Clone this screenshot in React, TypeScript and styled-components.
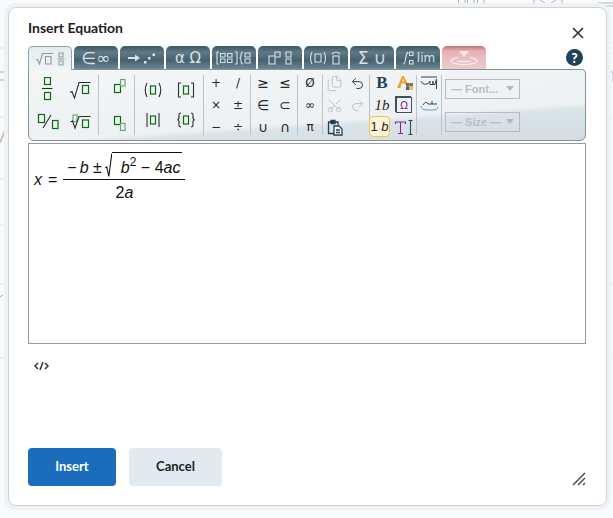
import React from 'react';
import styled, { createGlobalStyle } from 'styled-components';
import { Files, Undo2, Redo2, Scissors } from 'lucide-react';

const GREEN = '#0b6a12';
const LIGHT = '#62ad6a';
const INK = '#2b2f33';

const GlobalStyle = createGlobalStyle`
  html, body { margin: 0; padding: 0; background: #f9fafc; }
  body { font-family: Lato, "Noto Sans", sans-serif; color: #202122; }
`;

const Page = styled.div`
  position: relative;
  width: 613px;
  height: 518px;
  padding: 7px 6px 0 8px;
  box-sizing: border-box;
  overflow: hidden;
`;

const Backdrop = styled.svg`
  position: absolute;
  inset: 0;
`;

const Dialog = styled.div`
  position: relative;
  height: 499px;
  box-sizing: border-box;
  padding: 0 20px 19px 19px;
  display: flex;
  flex-direction: column;
  background: #fff;
  border: 1px solid #cdd3d9;
  border-radius: 8px;
  box-shadow: 0 0 0 4px #eff2f5;
`;

const Header = styled.div`
  height: 38px;
  padding-top: 1px;
  box-sizing: border-box;
  display: flex;
  align-items: center;
  justify-content: space-between;
`;

const Title = styled.h2`
  margin: 0;
  font-size: 14px;
  font-weight: 700;
  color: #202122;
`;

const CloseButton = styled.button`
  display: flex;
  border: 0;
  padding: 0;
  margin: 10px 2px 0 0;
  background: none;
`;

const TabRow = styled.div`
  height: 23px;
  display: flex;
  gap: 2px;
  align-items: flex-end;
`;

const Tab = styled.div<{ $kind?: 'active' | 'alert'; $size?: number }>`
  width: 44px;
  height: ${p => (p.$kind === 'active' ? '24px' : '23px')};
  margin-bottom: ${p => (p.$kind === 'active' ? '-1px' : '0')};
  position: relative;
  z-index: ${p => (p.$kind === 'active' ? 2 : 0)};
  box-sizing: border-box;
  border-radius: 5px 5px 0 0;
  display: flex;
  align-items: center;
  justify-content: center;
  gap: 2px;
  font-family: "DejaVu Sans", sans-serif;
  font-size: ${p => p.$size ?? 13}px;
  white-space: nowrap;
  color: ${p => (p.$kind === 'active' ? '#8d9ca4' : p.$kind === 'alert' ? '#fbeeee' : '#d8e1e5')};
  background: ${p =>
    p.$kind === 'active'
      ? 'linear-gradient(#e6ebee, #f1f4f5)'
      : p.$kind === 'alert'
        ? 'linear-gradient(#c96f72 0, #e6b1b2 22%, #e9bfc0 55%, #efcaca 100%)'
        : 'linear-gradient(#3c5866 0, #5f7985 28%, #47626f 62%, #6c8792 100%)'};
  border: ${p => (p.$kind === 'active' ? '1px solid #8fa3ac' : '0')};
  border-bottom: 0;
`;

const HelpDot = styled.div`
  margin: 0 3px 3px auto;
  width: 17px;
  height: 17px;
  border-radius: 50%;
  background: #1f4257;
  color: #fff;
  font-size: 14px;
  font-weight: 900;
  line-height: 17px;
  text-align: center;
`;

const Toolbar = styled.div`
  height: 72px;
  box-sizing: border-box;
  display: flex;
  align-items: center;
  border: 1px solid #7f959f;
  border-radius: 0 4px 6px 6px;
  background: linear-gradient(176deg, #f4f6f7 0%, #edf1f3 66%, #dae3e7 71%, #d2dce1 100%);
`;

const Group = styled.div<{ $cols: number; $rows: number; $cell: number; $width: number }>`
  width: ${p => p.$width}px;
  height: 60px;
  flex: none;
  display: grid;
  grid-template-columns: repeat(${p => p.$cols}, ${p => p.$cell}px);
  grid-template-rows: repeat(${p => p.$rows}, ${p => (p.$rows === 3 ? 22 : 30)}px);
  justify-content: center;
  align-content: center;
  box-sizing: border-box;
  border-right: 1px solid #bcc4c8;
`;

const Cell = styled.div`
  display: flex;
  align-items: center;
  justify-content: center;
`;

const Sym = styled(Cell)<{ $size?: number }>`
  font-family: "DejaVu Sans", sans-serif;
  font-size: ${p => p.$size ?? 12}px;
  color: #26292b;
`;

const ToolText = styled(Cell)`
  height: 22px;
  font-family: "Liberation Serif", serif;
  font-size: 15px;
  font-style: italic;
  color: #1f2326;
`;

const SelectedTool = styled(Cell)`
  height: 21px;
  margin-left: -2px;
  width: 21px;
  box-sizing: border-box;
  border-radius: 4px;
  border: 1px solid #f4c24d;
  background: #fcf3d9;
  font-family: "Liberation Sans", sans-serif;
  font-size: 13px;
  color: #1f2326;
  white-space: pre;
`;

const BoldB = styled(Cell)`
  font-family: "Liberation Serif", serif;
  font-size: 17px;
  font-weight: 700;
  color: #1e4257;
`;

const BoxedOmega = styled.span`
  width: 14px;
  height: 14px;
  display: flex;
  align-items: center;
  justify-content: center;
  font-family: "DejaVu Sans", sans-serif;
  font-size: 10px;
  color: #7b2b90;
  border: 1px solid #3b5260;
  box-shadow: -1px -1px 0 #3b5260;
`;

const CutIcon = styled(Scissors)`
  transform: rotate(-90deg);
`;

const Selects = styled.div`
  flex: none;
  margin-left: 3px;
  height: 53px;
  display: flex;
  flex-direction: column;
  justify-content: space-between;
`;

const FakeSelect = styled.div`
  width: 75px;
  height: 20px;
  box-sizing: border-box;
  padding: 0 5px;
  display: flex;
  align-items: center;
  justify-content: space-between;
  border: 1px solid #b6bcc0;
  font-family: "Liberation Sans", sans-serif;
  font-size: 11px;
  font-weight: 700;
  color: #b9bfc3;
`;

const Caret = styled.span`
  border-left: 4px solid transparent;
  border-right: 4px solid transparent;
  border-top: 5px solid #b3b9bd;
`;

const Editor = styled.div`
  margin-top: 2px;
  height: 201px;
  box-sizing: border-box;
  border: 1px solid #999;
  padding: 9px 0 0 5px;
`;

const Equation = styled.div`
  display: flex;
  align-items: center;
  gap: 6px;
  font-family: "Liberation Sans", sans-serif;
  font-size: 16px;
  color: #111;
  i { font-style: italic; }
`;

const Fraction = styled.div`
  display: inline-flex;
  flex-direction: column;
  align-items: center;
`;

const Numerator = styled.div`
  display: flex;
  align-items: flex-end;
  box-sizing: border-box;
  height: 27px;
  padding: 0 3px 2px 4px;
  border-bottom: 1px solid #111;
  line-height: 18px;
  white-space: pre;
  sup { font-size: 12px; line-height: 0; position: relative; top: -7px; vertical-align: baseline; }
`;

const Op = styled.span`
  margin: 0 3px 0 0;
`;

const Denominator = styled.div`
  box-sizing: border-box;
  height: 26px;
  padding-top: 3px;
  line-height: 19px;
`;

const Radicand = styled.span`
  border-top: 1px solid #111;
  padding: 6px 2px 0 9px;
  line-height: 18px;
`;

const SourceRow = styled.div`
  margin: 14px 0 0 6px;
  height: 16px;
  display: flex;
  align-items: center;
`;

const Footer = styled.div`
  margin-top: auto;
  display: flex;
  align-items: flex-end;
  gap: 13px;
`;

const ActionButton = styled.button<{ $primary?: boolean }>`
  width: ${p => (p.$primary ? 88 : 93)}px;
  height: 38px;
  padding: 0 0 2px;
  border: 0;
  border-radius: 4px;
  font-family: Lato, sans-serif;
  font-size: 13px;
  font-weight: 700;
  background: ${p => (p.$primary ? '#1a6dbc' : '#e3e9f1')};
  color: ${p => (p.$primary ? '#fff' : '#202122')};
`;

const ResizeGrip = styled.svg`
  margin-left: auto;
`;

// drawn math templates, all on a 26x26 grid
const Box = ({ x, y, w = 6, h = 8, light }: { x: number; y: number; w?: number; h?: number; light?: boolean }) => (
  <rect x={x} y={y} width={w} height={h} fill="none" stroke={light ? LIGHT : GREEN} strokeWidth="1.2" />
);

const Tpl = ({ children }: { children: React.ReactNode }) => (
  <svg width="26" height="26" viewBox="0 0 26 26" fill="none" stroke={INK} strokeWidth="1.1">
    {children}
  </svg>
);

const templates: Record<string, React.ReactNode> = {
  frac: <><Box x={10.5} y={0.5} h={7} /><path d="M8 11.5H18.5" /><Box x={10.5} y={15.5} h={7} /></>,
  sqrt: <><path d="M3 15.5L5 14.5L7.5 21L12 5.5H23.5" /><Box x={15.5} y={8.5} h={8} /></>,
  slash: <><Box x={4.5} y={7.5} /><path d="M9 21L17 8" /><Box x={18.5} y={13.5} w={5.5} /></>,
  root: <><Box x={6} y={8} w={4} h={6.5} light /><path d="M3.5 15L5.5 14L8 21L12 9.5H23.5" /><Box x={15.5} y={13} h={7.5} /></>,
  sup: <><Box x={10.5} y={7.5} /><Box x={16.5} y={2.5} w={4.5} h={6.5} light /></>,
  sub: <><Box x={10.5} y={9.5} /><Box x={16.5} y={16.5} w={4.5} h={7} light /></>,
  paren: <><path d="M7 6Q3.5 13 7 20M19 6Q22.5 13 19 20" /><Box x={10.5} y={9} w={5} /></>,
  bracket: <><path d="M8 6H5.5V20H8M18 6H20.5V20H18" /><Box x={10.5} y={9} w={5} /></>,
  abs: <><path d="M7 6V20M19 6V20" /><Box x={10.5} y={9} w={5} /></>,
  brace: <><path d="M8 6Q5.5 6 6 9T4.5 13Q6.5 13 6 16.5T8 20M18 6Q20.5 6 20 9T21.5 13Q19.5 13 20 16.5T18 20" /><Box x={10.5} y={9} w={5} /></>,
};

const TabIcon = ({ d, w = 30 }: { d: string; w?: number }) => (
  <svg width={w} height="16" viewBox={`0 0 ${w} 14`} fill="none" stroke="currentColor" strokeWidth="1.1">
    <path d={d} />
  </svg>
);

const Radical = () => (
  <svg width="7" height="24" viewBox="0 0 7 24" fill="none" stroke="#111" strokeWidth="1.1">
    <path d="M0.3 15L1.800 14L3.800 23.500L6.800 0.500" />
  </svg>
);

const symbols = [
  { size: 12, items: ['+', '/', '×', '±', '−', '÷'] },
  { size: 14, items: ['≥', '≤', '∈', '⊂', '∪', '∩'] },
];

export default function App() {
  return (
    <Page>
      <GlobalStyle />
      <Backdrop width="613" height="518" fill="none" stroke="#dfe3e8">
        <path d="M0 48H8M0 117H8M0 179H8M0 225H8M0 284H8M0 358H8M607 48H613M607 117H613M607 284H613M607 358H613" />
        <path d="M458.500 0V5.500H465V0M467.500 0V5.500H474V0M477.500 0V5.500H484V0M534 0V6M562 0V6M540 0L548 5L556 0M598 3H613M600 6H613" stroke="#aab2ba" />
        <path d="M0 143L7 125" stroke="#c9c3b4" strokeWidth="2" />
        <path d="M0 297L3 295" stroke="#aab1b8" />
        <path d="M0 72H5M0 80H5M609 72H613V82" stroke="#c4ccd4" strokeWidth="1.5" />
      </Backdrop>
      <Dialog>
        <Header>
          <Title>Insert Equation</Title>
          <CloseButton aria-label="Close">
            <svg width="12" height="12" viewBox="0 0 12 12" stroke="#333" strokeWidth="1.7">
              <path d="M1 1L11 11M11 1L1 11" />
            </svg>
          </CloseButton>
        </Header>
        <TabRow>
          <Tab $kind="active">
            <TabIcon d="M1 8L2.500 7.500L4.500 12L7.500 1.500H18M10.500 4.500H16V12H10.500ZM24 1H28V5H24ZM22.500 7H29.500M24 9H28V13H24Z" />
          </Tab>
          <Tab $size={17}>∈∞</Tab>
          <Tab>
            <svg width="30" height="14" viewBox="0 0 30 14" fill="currentColor">
              <path d="M1 6H8V3.500L13 7L8 10.500V8H1Z" />
              <path d="M17 10h2.500v2.500H17ZM21 6h2.500v2.500H21ZM25.500 2.500H28V5H25.500Z" />
            </svg>
          </Tab>
          <Tab $size={15}>α Ω</Tab>
          <Tab>
            <TabIcon w={36} d="M3 1H1V13H3M19 1H21V13H19M4.500 2.500H9V6H4.500ZM11.500 2.500H16V6H11.500ZM4.500 8H9V11.500H4.500ZM11.500 8H16V11.500H11.500ZM27 1Q25 1 25 4T23.500 7Q25 7 25 10T27 13M29 2H34V6H29ZM29 8H34V12H29Z" />
          </Tab>
          <Tab>
            <TabIcon d="M4 5H10V13H4ZM10 1H15V6H10ZM21 1H26V6H21ZM21 8H26V13H21Z" />
          </Tab>
          <Tab>
            <TabIcon w={36} d="M4 1Q1 7 4 13M16 1Q19 7 16 13M7 3H13V11H7ZM25 5H31V13H25ZM24 3Q28 -1 32 3" />
          </Tab>
          <Tab $size={17}>Σ ∪</Tab>
          <Tab $size={12}>
            <TabIcon w={14} d="M2 13Q4 13 4.500 8T7 1M8.500 1H12V4.500H8.500ZM8.500 9.500H12V13H8.500Z" />
            lim
          </Tab>
          <Tab $kind="alert">
            <svg width="30" height="16" viewBox="0 0 30 16" fill="none" stroke="currentColor" strokeWidth="1.1">
              <path d="M10 1H20L15 7Z" fill="currentColor" stroke="none" />
              <path d="M9 7.500C4 8.500 2 10 2 11C2 13 8 14.500 15 14.500S28 13 28 11C28 10 26 8.500 21 7.500M8 10.500C8 12 22 12 22 10.500" />
            </svg>
          </Tab>
          <HelpDot>?</HelpDot>
        </TabRow>
        <Toolbar>
          <Group $cols={2} $rows={2} $cell={33} $width={70}>
            {['frac', 'sqrt', 'slash', 'root'].map(t => (
              <Cell key={t}><Tpl>{templates[t]}</Tpl></Cell>
            ))}
          </Group>
          <Group $cols={1} $rows={2} $cell={33} $width={36}>
            {['sup', 'sub'].map(t => (
              <Cell key={t}><Tpl>{templates[t]}</Tpl></Cell>
            ))}
          </Group>
          <Group $cols={2} $rows={2} $cell={33} $width={69}>
            {['paren', 'bracket', 'abs', 'brace'].map(t => (
              <Cell key={t}><Tpl>{templates[t]}</Tpl></Cell>
            ))}
          </Group>
          {symbols.map((set, i) => (
            <Group key={i} $cols={2} $rows={3} $cell={22} $width={47}>
              {set.items.map(s => <Sym key={s} $size={set.size}>{s}</Sym>)}
            </Group>
          ))}
          <Group $cols={1} $rows={3} $cell={22} $width={25}>
            <Sym>Ø</Sym>
            <Sym>∞</Sym>
            <Sym>π</Sym>
          </Group>
          <Group $cols={2} $rows={3} $cell={23} $width={47}>
            <Cell><Files size={17} color="#b9c0c4" strokeWidth={1.3} /></Cell>
            <Cell><Undo2 size={15} color="#2b4656" strokeWidth={1.6} /></Cell>
            <Cell><CutIcon size={17} color="#b4bbbf" strokeWidth={1.2} /></Cell>
            <Cell><Redo2 size={15} color="#bcc3c7" strokeWidth={1.6} /></Cell>
            <Cell>
              <svg width="16" height="17" viewBox="0 0 16 17" fill="none" stroke="#23404f" strokeWidth="1.3">
                <path d="M5 3H1.500V14.500H7" />
                <path d="M4 1.500H8V4.500H4Z" fill="#23404f" />
                <path d="M8 3H11V6.500" />
                <path d="M7 7H12L15 10V16H7ZM9 11H13M9 13.500H13" fill="#fff" />
              </svg>
            </Cell>
            <Cell />
          </Group>
          <Group $cols={2} $rows={3} $cell={22} $width={47}>
            <BoldB>B</BoldB>
            <Cell>
              <svg width="17" height="16" viewBox="0 0 17 16">
                <path d="M1 13L6 1H8L12 10H9.500L9 8.500H5.500L4.500 13ZM6 6.500H8.300L7 3.500Z" fill="#eda42d" fillRule="evenodd" />
                <rect x="10" y="8" width="3.500" height="3.500" fill="#e0433a" />
                <rect x="13.500" y="8" width="3.500" height="3.500" fill="#3c9a3f" />
                <rect x="10" y="11.500" width="3.500" height="3.500" fill="#3561c4" />
                <rect x="13.500" y="11.500" width="3.500" height="3.500" fill="#f2c32e" />
              </svg>
            </Cell>
            <ToolText>1b</ToolText>
            <Cell><BoxedOmega>Ω</BoxedOmega></Cell>
            <SelectedTool>1 <i>b</i></SelectedTool>
            <Cell>
              <svg width="20" height="17" viewBox="0 0 20 17" fill="none" strokeWidth="1.1">
                <path d="M1.500 5V3H11.500V5M6.500 3V14.500M4 14.500H9" stroke="#7b2b90" />
                <path d="M14.500 1.500H18.500M16.500 1.500V15.500M14.500 15.500H18.500" stroke="#2b4656" />
              </svg>
            </Cell>
          </Group>
          <Group $cols={1} $rows={3} $cell={22} $width={25}>
            <Cell>
              <svg width="19" height="16" viewBox="0 0 19 16" fill="none" stroke="#2b4656" strokeWidth="1">
                <path d="M1 2H17M1 6Q2 10 7 9Q9 8.500 10 6V9.500H13V6V9.500H15L16.500 4V14" />
              </svg>
            </Cell>
            <Cell>
              <svg width="19" height="16" viewBox="0 0 19 16" fill="none" strokeWidth="1">
                <path d="M3 8Q6 3 8 7H12V4M12 7H17" stroke="#2b4656" />
                <path d="M1 9Q1 13 8 13H12Q18 13 18 10" stroke="#5f93c9" />
              </svg>
            </Cell>
            <Cell />
          </Group>
          <Selects>
            <FakeSelect>— Font...<Caret /></FakeSelect>
            <FakeSelect>— Size —<Caret /></FakeSelect>
          </Selects>
        </Toolbar>
        <Editor>
          <Equation>
            <i>x</i>
            <span>=</span>
            <Fraction>
              <Numerator>
                <Op>−</Op><i>b</i><Op> ±</Op><Radical />
                <Radicand><i>b</i><sup>2</sup> − 4<i>ac</i></Radicand>
              </Numerator>
              <Denominator>2<i>a</i></Denominator>
            </Fraction>
          </Equation>
        </Editor>
        <SourceRow>
          <svg width="15" height="10" viewBox="0 0 15 10" fill="none" stroke="#333" strokeWidth="1.5">
            <path d="M4 2L1 5L4 8M11 2L14 5L11 8M9 1L6 9" />
          </svg>
        </SourceRow>
        <Footer>
          <ActionButton $primary>Insert</ActionButton>
          <ActionButton>Cancel</ActionButton>
          <ResizeGrip width="14" height="14" viewBox="0 0 14 14" stroke="#4a4f53" strokeWidth="1.5">
            <path d="M1 13L13 1M6 13L13 6M11 13L13 11" />
          </ResizeGrip>
        </Footer>
      </Dialog>
    </Page>
  );
}
